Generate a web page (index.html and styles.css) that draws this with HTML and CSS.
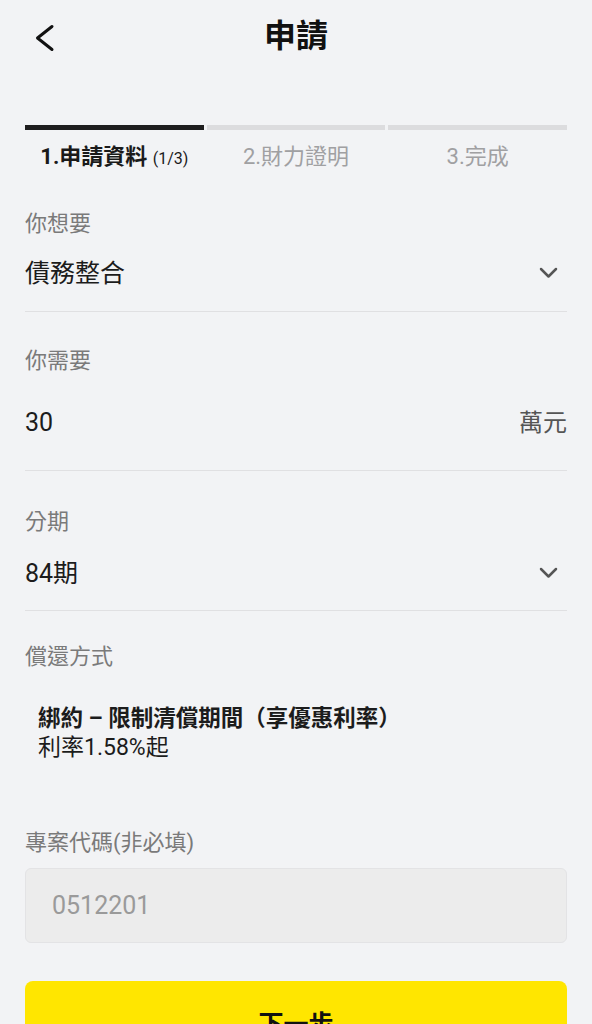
FILE: index.html
```html
<!DOCTYPE html>
<html lang="zh-Hant">
<head>
<meta charset="utf-8">
<title>申請</title>
<link rel="stylesheet" href="styles.css">
</head>
<body>
<div class="page">
  <header class="header">
    <div class="back">
      <svg width="32" height="40" viewBox="0 0 32 40"><polyline points="27,10.5 12.5,22 27,33.5" fill="none" stroke="#111" stroke-width="3" stroke-linecap="round" stroke-linejoin="round"/></svg>
    </div>
    <h1 class="title">申請</h1>
    <div></div>
  </header>

  <div class="bars">
    <div class="bar bar-active"></div>
    <div class="bar"></div>
    <div class="bar"></div>
  </div>
  <div class="steps">
    <div class="step step-active">1.申請資料 <span class="step-count">(1/3)</span></div>
    <div class="step">2.財力證明</div>
    <div class="step">3.完成</div>
  </div>

  <div class="field field-1">
    <div class="label">你想要</div>
    <div class="value-row gap-1">
      <span class="value">債務整合</span>
      <svg class="chev" width="24" height="16" viewBox="0 0 24 16"><polyline points="5,3 12.5,10.5 20,3" fill="none" stroke="#555" stroke-width="2.5" stroke-linecap="round" stroke-linejoin="round"/></svg>
    </div>
  </div>

  <div class="field field-2">
    <div class="label">你需要</div>
    <div class="value-row gap-2">
      <span class="value">30</span>
      <span class="unit">萬元</span>
    </div>
  </div>

  <div class="field field-3">
    <div class="label">分期</div>
    <div class="value-row gap-3">
      <span class="value">84期</span>
      <svg class="chev" width="24" height="16" viewBox="0 0 24 16"><polyline points="5,3 12.5,10.5 20,3" fill="none" stroke="#555" stroke-width="2.5" stroke-linecap="round" stroke-linejoin="round"/></svg>
    </div>
  </div>

  <div class="field field-4">
    <div class="label">償還方式</div>
    <div class="plan">
      <div class="plan-title">綁約 – 限制清償期間（享優惠利率）</div>
      <div class="plan-rate">利率1.58%起</div>
    </div>
  </div>

  <div class="field field-5">
    <div class="label">專案代碼(非必填)</div>
    <div class="input">0512201</div>
  </div>

  <button class="next">下一步</button>
</div>
</body>
</html>
```

FILE: styles.css
```css
* { box-sizing: border-box; }
html, body { margin: 0; padding: 0; }
body {
  background: #f2f3f5;
  font-family: Roboto, "Noto Sans CJK TC", sans-serif;
  color: #222;
}
.page {
  padding: 0 25px;
}
.header {
  height: 72px;
  display: grid;
  grid-template-columns: 1fr auto 1fr;
  align-items: center;
}
.back { display: flex; align-items: center; }
.back svg { display: block; }
.title {
  margin: 0;
  font-size: 32px;
  font-weight: 700;
  line-height: 38px;
  color: #111;
}
.bars {
  margin-top: 53px;
  display: grid;
  grid-template-columns: 1fr 1fr 1fr;
  gap: 3px;
}
.bar {
  height: 5px;
  background: #dcdcde;
}
.bar-active { background: #1e1e1e; }
.steps {
  margin-top: 14px;
  display: grid;
  grid-template-columns: 1fr 1fr 1fr;
  gap: 3px;
}
.step {
  text-align: center;
  font-size: 22px;
  line-height: 26px;
  color: #a0a0a2;
  white-space: nowrap;
}
.step-active {
  color: #1a1a1a;
  font-weight: 700;
}
.step-count {
  font-size: 16px;
  font-weight: 400;
}
.field { border-bottom: 1px solid #e0e0e2; }
.label {
  font-size: 22px;
  line-height: 28px;
  color: #7a7a7a;
}
.value-row {
  height: 36px;
  display: flex;
  align-items: center;
  justify-content: space-between;
}
.value {
  font-size: 25px;
  line-height: 36px;
  color: #1c1c1c;
}
.unit {
  font-size: 24px;
  line-height: 36px;
  color: #555;
}
.chev { display: block; margin-right: 7px; }
.field-1 { padding-top: 38px; padding-bottom: 19px; }
.gap-1 { margin-top: 18px; }
.field-2 { padding-top: 35px; padding-bottom: 29px; }
.gap-2 { margin-top: 30px; }
.field-3 { padding-top: 37px; padding-bottom: 18px; }
.gap-3 { margin-top: 20px; }
.field-4 { padding-top: 32px; border-bottom: none; }
.plan {
  margin-top: 32px;
  padding-left: 13px;
  font-size: 22.5px;
  line-height: 30px;
  color: #1c1c1c;
}
.plan-title { font-weight: 700; }
.plan-rate { font-size: 23px; }
.field-5 { margin-top: 66px; border-bottom: none; }
.input {
  margin-top: 11px;
  height: 75px;
  border: 1px solid #e3e3e5;
  border-radius: 6px;
  background: #ececec;
  padding-left: 26px;
  display: flex;
  align-items: center;
  font-size: 25px;
  color: #9a9a9a;
}
.next {
  display: block;
  width: 100%;
  margin-top: 38px;
  border: none;
  border-radius: 8px;
  background: #ffe600;
  padding: 28px 0;
  font-family: inherit;
  font-size: 25px;
  font-weight: 700;
  line-height: 32px;
  color: #111;
}
```
